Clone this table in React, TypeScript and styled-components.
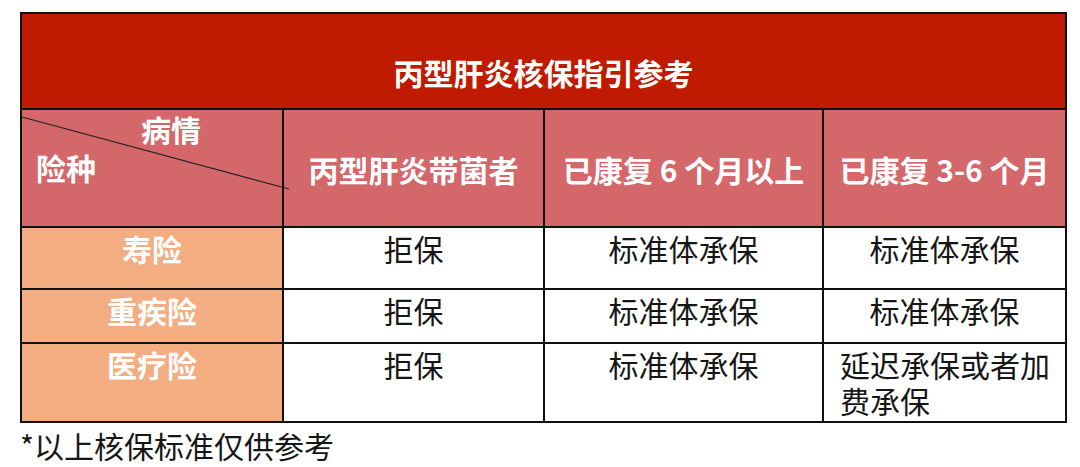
import React from "react";
import styled, { createGlobalStyle } from "styled-components";

const Global = createGlobalStyle`
  html, body { margin: 0; padding: 0; background: #ffffff; }
  body { font-family: "Noto Sans CJK SC", "Noto Sans", sans-serif; }
`;

const Page = styled.div`
  width: 1080px;
  height: 467px;
  padding: 12px 0 0 20px;
  box-sizing: border-box;
  background: #fff;
  overflow: hidden;
`;

const Table = styled.table`
  border-collapse: collapse;
  table-layout: fixed;
  width: 1045px;
  font-family: "Noto Sans CJK SC", sans-serif;
`;

const Cell = styled.td<{ $bg?: string; $h: number; $bold?: boolean; $light?: boolean; $top?: boolean; $left?: boolean }>`
  border: 2px solid #111;
  background: ${(p) => p.$bg || "#ffffff"};
  height: ${(p) => p.$h}px;
  padding: ${(p) => (p.$left ? "2px 8px 0 16px" : "2px 2px 0")};
  box-sizing: border-box;
  color: ${(p) => (p.$light ? "#ffffff" : "#161616")};
  font-weight: ${(p) => (p.$bold ? 700 : 400)};
  font-size: 30px;
  line-height: 36px;
  text-align: ${(p) => (p.$left ? "left" : "center")};
  vertical-align: ${(p) => (p.$top ? "top" : "middle")};
  white-space: ${(p) => (p.$left ? "normal" : "nowrap")};
`;

const TitleCell = styled.td`
  border: 2px solid #111;
  background: #c01b00;
  height: 96px;
  padding: 22px 0 0;
  box-sizing: border-box;
  color: #ffffff;
  font-weight: 700;
  font-size: 30px;
  text-align: center;
  vertical-align: middle;
`;

const CornerCell = styled.td`
  position: relative;
  border: 2px solid #111;
  background: #d4676a;
  height: 118px;
  padding: 1px 0 0;
  box-sizing: border-box;
  color: #ffffff;
  font-weight: 700;
  font-size: 30px;
  line-height: 36px;
  vertical-align: top;
`;

const CornerLabels = styled.div`
  display: flex;
  flex-direction: column;
  align-items: flex-start;
`;

const TopLabel = styled.span`
  margin-left: 119px;
`;

const BottomLabel = styled.span`
  margin-left: 14px;
  margin-top: 2px;
`;

const Diagonal = styled.svg`
  position: absolute;
  left: 0;
  top: 0;
  width: 270px;
  height: 118px;
  overflow: visible;
  pointer-events: none;
`;

const Note = styled.div`
  margin-top: 4px;
  font-family: "Noto Sans CJK SC", sans-serif;
  font-size: 30px;
  line-height: 36px;
  color: #161616;
`;

const HEAD = "#d4676a";
const SIDE = "#f3ad80";

const rows = [
  { name: "寿险", h: 62, cells: ["拒保", "标准体承保", "标准体承保"] },
  { name: "重疾险", h: 54, cells: ["拒保", "标准体承保", "标准体承保"] },
  { name: "医疗险", h: 79, cells: ["拒保", "标准体承保", "延迟承保或者加费承保"] },
];

export default function App() {
  return (
    <>
      <Global />
      <Page>
        <Table>
          <colgroup>
            <col style={{ width: 262 }} />
            <col style={{ width: 261 }} />
            <col style={{ width: 279 }} />
            <col style={{ width: 243 }} />
          </colgroup>
          <tbody>
            <tr>
              <TitleCell colSpan={4}>丙型肝炎核保指引参考</TitleCell>
            </tr>
            <tr>
              <CornerCell>
                <Diagonal viewBox="0 0 270 118">
                  <line x1="0" y1="7" x2="267" y2="79" stroke="#222" strokeWidth="1.2" />
                </Diagonal>
                <CornerLabels>
                  <TopLabel>病情</TopLabel>
                  <BottomLabel>险种</BottomLabel>
                </CornerLabels>
              </CornerCell>
              <Cell $bg={HEAD} $h={118} $bold $light>丙型肝炎带菌者</Cell>
              <Cell $bg={HEAD} $h={118} $bold $light>已康复 6 个月以上</Cell>
              <Cell $bg={HEAD} $h={118} $bold $light>已康复 3-6 个月</Cell>
            </tr>
            {rows.map((r) => (
              <tr key={r.name}>
                <Cell $bg={SIDE} $h={r.h} $bold $light $top>{r.name}</Cell>
                {r.cells.map((c, i) => (
                  <Cell key={i} $h={r.h} $top $left={c.length > 6}>{c}</Cell>
                ))}
              </tr>
            ))}
          </tbody>
        </Table>
        <Note>*以上核保标准仅供参考</Note>
      </Page>
    </>
  );
}
